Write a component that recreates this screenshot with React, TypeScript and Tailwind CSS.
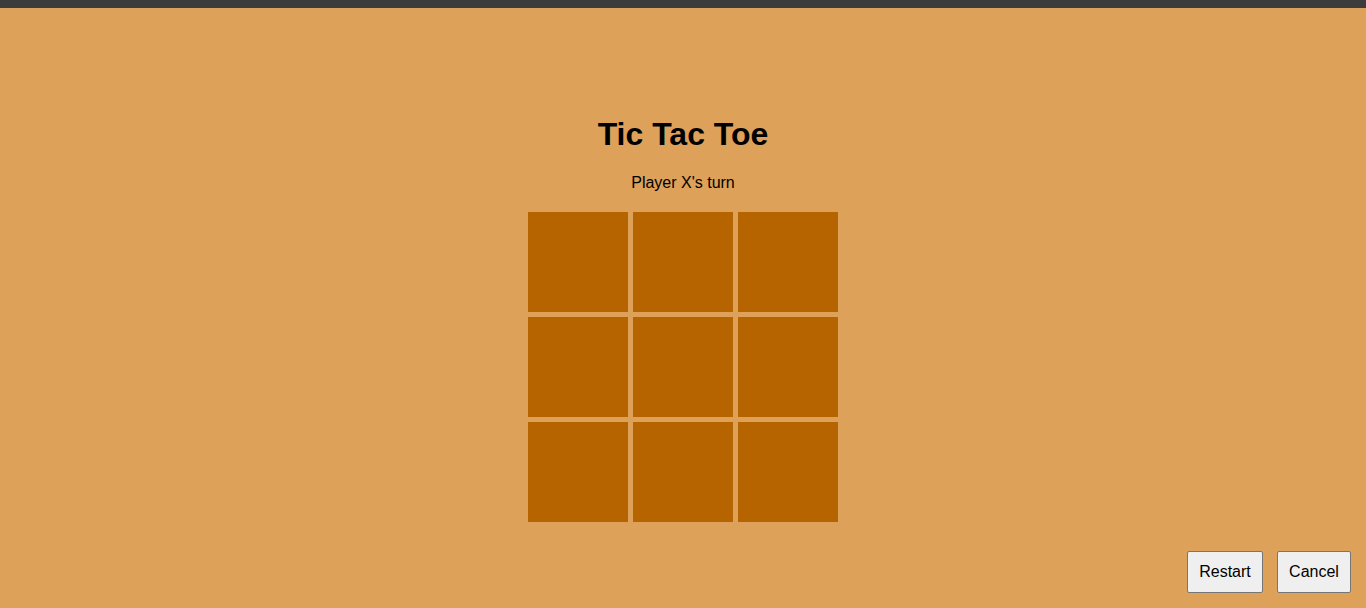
import React from "react";

export default function App() {
  const cells = Array.from({ length: 9 });
  return (
    <div
      className="h-[608px] w-full bg-[#dea15a] flex flex-col overflow-hidden"
      style={{ fontFamily: '"Liberation Sans", Arial, sans-serif' }}
    >
      <div className="h-2 w-full bg-[#3c3c3c] shrink-0" />
      <div className="flex flex-col items-center pt-[108px]">
        <h1 className="text-[32px] font-bold leading-[37px] text-black">Tic Tac Toe</h1>
        <p className="mt-[21px] text-[16px] leading-[18px] text-black">Player X's turn</p>
        <div className="mt-[20px] grid grid-cols-[100px_100px_100px] gap-[5px]">
          {cells.map((_, i) => (
            <div key={i} className="h-[100px] w-[100px] bg-[#b56400]" />
          ))}
        </div>
      </div>
      <div className="mt-[29px] flex justify-end gap-[14px] pr-[15px]">
        <button className="h-[42px] w-[76px] rounded-[2px] border border-[#767676] bg-[#efefef] text-[16px] text-black">
          Restart
        </button>
        <button className="h-[42px] w-[74px] rounded-[2px] border border-[#767676] bg-[#efefef] text-[16px] text-black">
          Cancel
        </button>
      </div>
    </div>
  );
}
